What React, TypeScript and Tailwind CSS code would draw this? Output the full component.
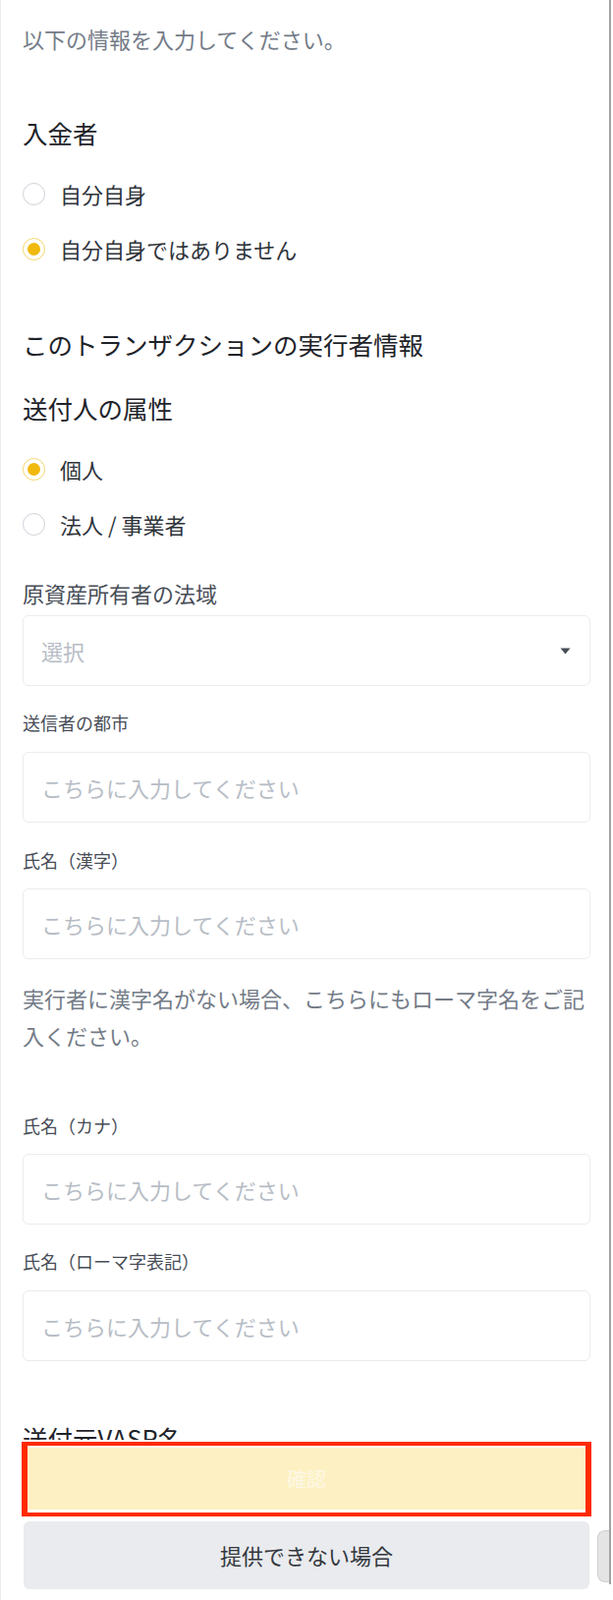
import { useState } from "react";

const FONT = "font-['Noto_Sans_CJK_JP','Noto_Sans_CJK_SC',sans-serif]";

function Radio({ label, checked, onClick }: { label: string; checked: boolean; onClick: () => void }) {
  return (
    <button type="button" onClick={onClick} className="flex h-[56px] w-full items-center gap-[15px] text-left">
      {checked ? (
        <span className="flex h-[23px] w-[23px] shrink-0 items-center justify-center rounded-full border-[1.5px] border-[#f3d66e]">
          <span className="h-[13px] w-[13px] rounded-full bg-[#f0b90b]" />
        </span>
      ) : (
        <span className="h-[23px] w-[23px] shrink-0 rounded-full border-[1.5px] border-[#cdd1d7]" />
      )}
      <span className="text-[22px] leading-[30px] text-[#2f343b]">{label}</span>
    </button>
  );
}

function FieldLabel({ children, className = "" }: { children: string; className?: string }) {
  return <div className={`h-[26px] text-[18px] leading-[26px] text-[#474d57] ${className}`}>{children}</div>;
}

function TextBox({ className = "" }: { className?: string }) {
  return (
    <input
      readOnly
      placeholder="こちらに入力してください"
      className={`block h-[72px] w-full rounded-[6px] border border-[#eaecef] bg-white px-[18px] text-[22px] text-[#1e2329] outline-none placeholder:text-[#b7bdc6] ${className}`}
    />
  );
}

export default function App() {
  const [payer, setPayer] = useState("other");
  const [kind, setKind] = useState("person");

  return (
    <div className={`relative h-[1628px] w-full overflow-hidden border-l border-[#ececec] bg-white ${FONT}`}>
      <div className="pl-[22px] pr-[23px]">
        <p className="mt-[24px] h-[30px] text-[22px] leading-[30px] text-[#737b87]">以下の情報を入力してください。</p>

        <h2 className="mt-[64px] h-[34px] text-[25.5px] leading-[34px] text-[#1e2329]">入金者</h2>
        <div className="mt-[17px]">
          <Radio label="自分自身" checked={payer === "self"} onClick={() => setPayer("self")} />
          <Radio label="自分自身ではありません" checked={payer === "other"} onClick={() => setPayer("other")} />
        </div>

        <h2 className="mt-[52px] h-[34px] text-[25.5px] leading-[34px] text-[#1e2329]">このトランザクションの実行者情報</h2>
        <h3 className="mt-[31px] h-[34px] text-[25.5px] leading-[34px] text-[#1e2329]">送付人の属性</h3>
        <div className="mt-[17px]">
          <Radio label="個人" checked={kind === "person"} onClick={() => setKind("person")} />
          <Radio label="法人 / 事業者" checked={kind === "corp"} onClick={() => setKind("corp")} />
        </div>

        <div className="mt-[27px] h-[30px] text-[22px] leading-[30px] text-[#474d57]">原資産所有者の法域</div>
        <div className="mt-[8px] flex h-[72px] items-center justify-between rounded-[6px] border border-[#eaecef] px-[18px]">
          <span className="text-[22px] text-[#b7bdc6]">選択</span>
          <svg width="11" height="7" viewBox="0 0 11 7" className="mr-[1px]">
            <path d="M0.5 0.5h10L5.5 6.5z" fill="#474d57" />
          </svg>
        </div>

        <FieldLabel className="mt-[24px]">送信者の都市</FieldLabel>
        <TextBox className="mt-[17px]" />

        <FieldLabel className="mt-[25px]">氏名（漢字）</FieldLabel>
        <TextBox className="mt-[16px]" />

        <p className="mt-[20px] text-[22px] leading-[38px] text-[#737b87]">
          実行者に漢字名がない場合、こちらにもローマ字名をご記入ください。
        </p>

        <FieldLabel className="mt-[60px]">氏名（カナ）</FieldLabel>
        <TextBox className="mt-[16px]" />

        <FieldLabel className="mt-[24px]">氏名（ローマ字表記）</FieldLabel>
        <TextBox className="mt-[17px]" />

        <h3 className="mt-[61px] h-[34px] text-[25.5px] leading-[34px] text-[#1e2329]">送付元VASP名</h3>
        <TextBox className="mt-[17px]" />
      </div>

      {/* sticky footer */}
      <div className="absolute bottom-0 left-0 right-0 h-[163px] bg-white pt-[2px]">
        <div className="ml-[21px] mr-[22px] h-[76px] border-x-[6px] border-y-[4px] border-[#ff2a00] pb-[3px] pt-[2px]">
          <button type="button" className="flex h-full w-full items-center justify-center bg-[#fdf1c3] text-[20px] text-[#fdf8e6]">
            確認
          </button>
        </div>
        <button
          type="button"
          className="ml-[23px] mt-[5px] flex h-[69px] w-[576px] items-center justify-center rounded-[6px] bg-[#e9ebee] text-[22px] text-[#33373d]"
        >
          提供できない場合
        </button>
      </div>

      {/* window edge + floating tab */}
      <div className="absolute bottom-[16px] right-[2px] top-0 w-[2px] bg-[#a3a3a3]" />
      <div className="absolute right-[4px] top-[1557px] h-[53px] w-[12px] rounded-l-[8px] border border-r-0 border-[#cfcfcf] bg-[#e4e4e4]" />
    </div>
  );
}
